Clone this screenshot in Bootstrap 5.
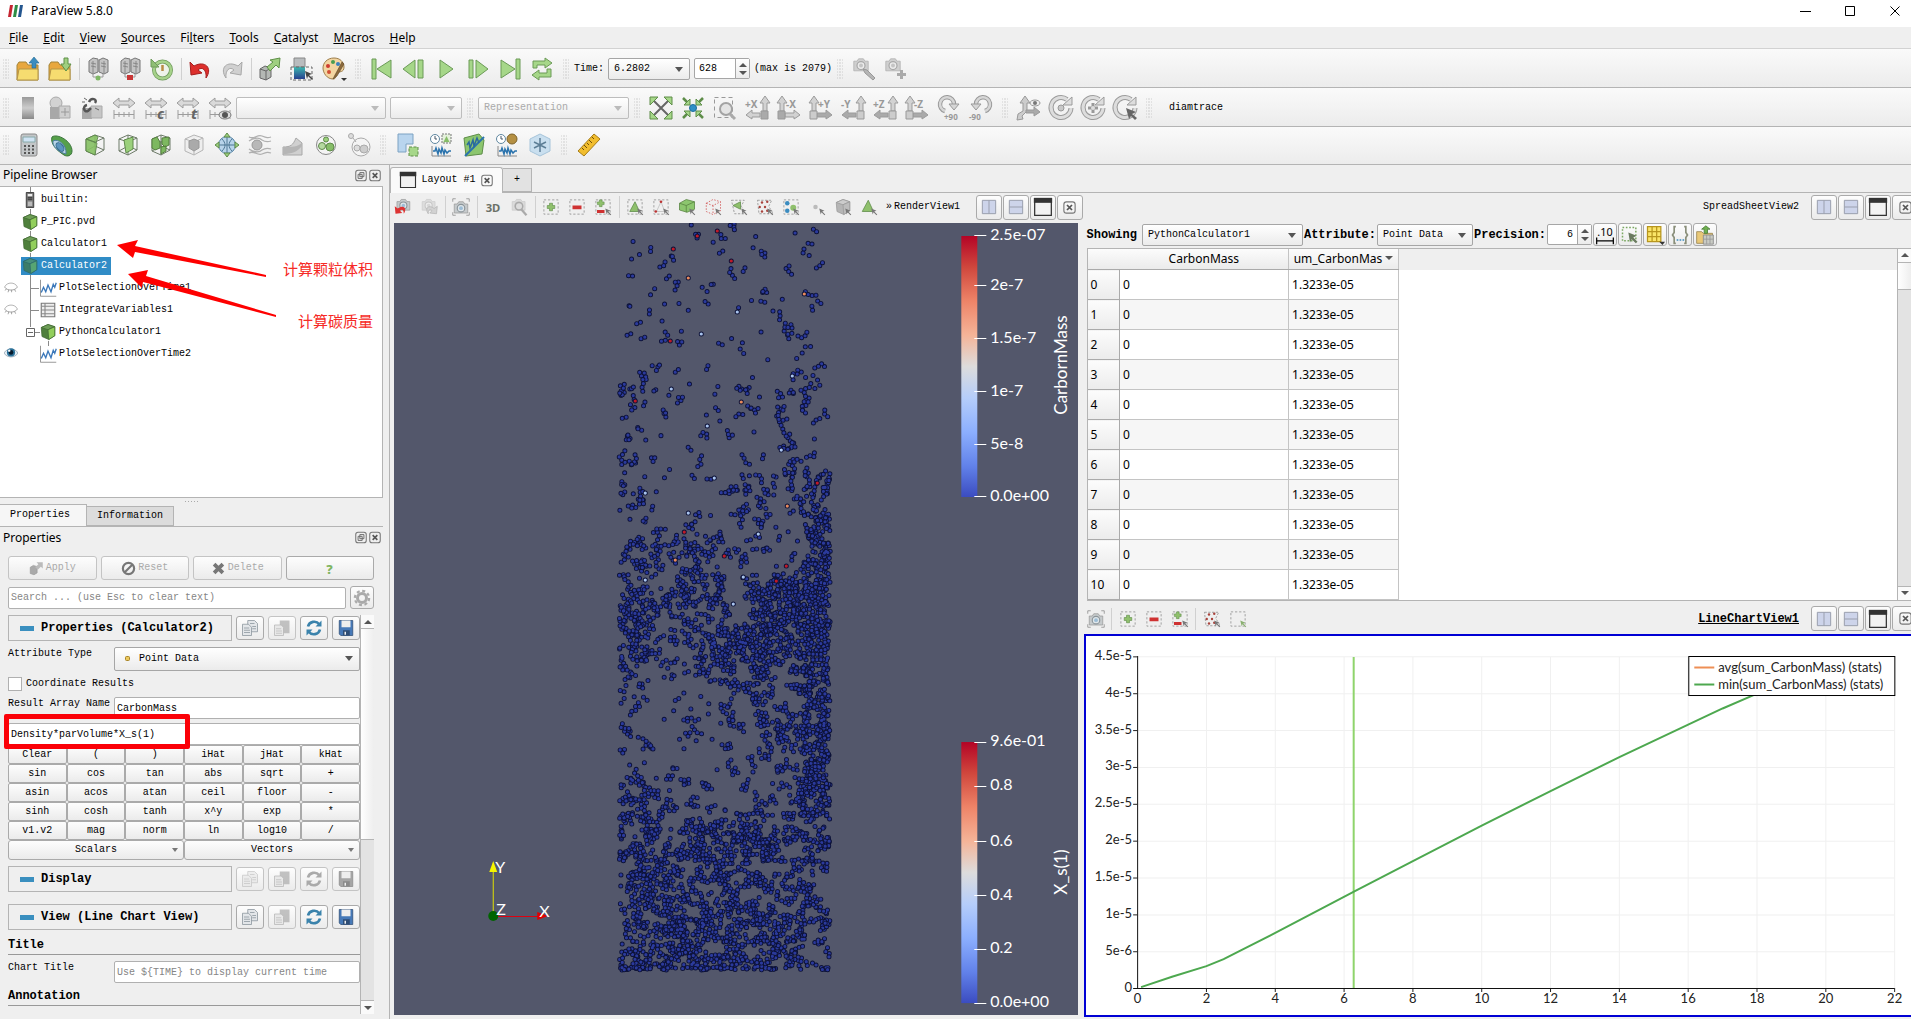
<!DOCTYPE html>
<html lang="en">
<head>
<meta charset="utf-8">
<meta name="viewport" content="width=device-width, initial-scale=1">
<title>ParaView 5.8.0</title>
<link href="https://cdn.jsdelivr.net/npm/bootstrap@5.3.0/dist/css/bootstrap.min.css" rel="stylesheet">
<style>
:root{--mono:"Liberation Mono","Noto Sans CJK SC",monospace;--ui:"Noto Sans","Noto Sans CJK SC",sans-serif;--line:#b4b4b4;--face:#efefef}
body{font:12px/16px var(--ui);color:#000;background:var(--face);height:100vh;overflow:hidden}
.mono{font:10px/14px var(--mono)}
.monob{font:bold 12px/14px var(--mono)}
button,input,select{color:#000}
.titlebar{height:27px;background:#fff;padding:0 0 4px 8px;overflow:hidden}
.titlebar button{width:45px;border:0;background:none;padding:0;line-height:0}
.winbtns{margin-right:-7px}
.menubar{height:22px;gap:15px;padding:0 9px;border-bottom:1px solid #d2d2d2}
.menubar a{color:#000;text-decoration:none;line-height:21px}
.strip{height:39px;padding-top:2px;border-bottom:1px solid var(--line);background:linear-gradient(#fafafa,#ececec)}
.strip.last{height:38px;padding-top:0}
.ib{width:32px;height:32px;border:0;background:none;padding:0;display:flex;align-items:center;justify-content:center;flex:none}
.w33 .ib{width:33px}
.view .ib{width:26px;height:26px}
.ib svg{width:24px;height:24px;overflow:visible}
.view .ib svg{width:18px;height:18px}
.sep{width:6px;height:22px;flex:none;background:linear-gradient(#d0d0d0,#d0d0d0) center/1px 100% no-repeat}
.grip{width:16px;height:22px;flex:none;background:radial-gradient(circle,#aaa 1px,transparent 1px) center/3px 3px;background-clip:content-box;padding:0 5px}
.first{width:12px;padding:0 3px}
.pick{position:relative;display:flex;height:22px;flex:none}
.pick select{appearance:none;width:100%;height:100%;border:1px solid #a6a6a6;border-radius:2px;background:linear-gradient(#fff,#ebebeb);font:10px/14px var(--mono);padding:0 18px 0 5px}
.pick::after{content:"";position:absolute;right:7px;top:9px;border:4px solid transparent;border-top:5px solid #555;border-bottom:0;pointer-events:none}
.pick.off select{color:#aaa;border-color:#bdbdbd}.pick.off::after{border-top-color:#bbb}
.spin{display:flex;height:21px;border:1px solid #a6a6a6;border-radius:2px;background:#fff;flex:none}
.spin input{border:0;background:none;font:10px/14px var(--mono);padding:0 4px;min-width:0;flex:1}
.spin span{width:14px;border-left:1px solid #a6a6a6;background:linear-gradient(#fff,#ebebeb);display:flex;flex-direction:column;align-items:center;justify-content:center;gap:4px}
.up,.dn{border:4px solid transparent;width:0;height:0}
.up{border-bottom:4px solid #555;border-top:0}.dn{border-top:4px solid #555;border-bottom:0}
.dock{width:390px;flex:none;border-right:1px solid var(--line)}
.inner{width:383px}
.dockhead{height:21px;padding:0 1px 0 3px}
.dockhead button,.mini{border:0;background:none;padding:0;width:14px;height:14px;display:flex;align-items:center;justify-content:center}
.tree{border:1px solid var(--line);border-left:0;background:#fff;flex:1 1 0;overflow:hidden;position:relative}
.tree ul{padding-top:2px;position:relative}
.tree li{height:22px;display:flex;align-items:center}
.eye{width:21px;height:16px;flex:none;display:flex;justify-content:center}
.eye svg{width:14px;height:14px}
.node{display:flex;align-items:center;gap:2px;height:18px;padding-right:4px;color:#000;text-decoration:none}
.node svg{width:18px;height:18px}
.node.sel{background:#308cc6;color:#fff}
.sub1{margin-left:18px}
.over{position:absolute;left:0;top:0;pointer-events:none}
.note1,.note2{position:absolute;right:9px;font:15px/20px "Noto Sans CJK SC",sans-serif;color:#f62a26}
.note1{top:72px}.note2{top:124px}
.dots{height:7px;background:radial-gradient(circle,#aaa 1px,transparent 1px) center/3px 3px;background-clip:content-box;padding:2px 183px}
.tabs{height:22px;border-bottom:1px solid var(--line)}
.tabs button{border:1px solid var(--line);font:10px/14px var(--mono);padding:0 10px;background:#dcdcdc}
.tabs .on{background:#f6f6f6;border-bottom-color:#f6f6f6;border-left:0;height:22px}
.tabs .offt{height:20px;margin-left:-1px}
.pb{border:1px solid #aaa;border-radius:3px;background:linear-gradient(#fdfdfd,#ebebeb);display:flex;align-items:center;justify-content:center;gap:2px;font:10px/14px var(--mono);padding:0}
.pb:disabled{border-color:#c4c4c4;color:#aaa}
.acts .pb{flex:1 1 0;height:24px}.acts svg{width:15px;height:15px}
.tx{border:1px solid #b0b0b0;border-radius:2px;height:22px;background:#fff;font:10px/14px var(--mono);padding:0 2px;min-width:0;width:100%}
.tx::placeholder{color:#858585;opacity:1}
.body8{padding:8px 9px 13px 8px}
.row6{margin-top:6px}
.tick{width:14px;height:14px;border-color:#b0b0b0}
.grp{height:26px}
.grp>h2{flex:1;margin:0;height:26px;border:1px solid var(--line);padding-left:11px;display:flex;align-items:center;gap:7px;white-space:nowrap}
.grp>h2::before{content:"";width:14px;height:5px;background:#3a8fbf}
.grp .pb{width:28px;height:24px}.grp svg{width:18px;height:18px}
.lab{width:106px;flex:none;line-height:14px}
.r246{flex:1;position:relative}
.calc{display:grid;grid-template-columns:repeat(6,1fr)}
.calc .pb{height:19px;border-radius:2px}
.dd{position:relative;height:20px}.dd::after{content:"";position:absolute;right:5px;top:7px;border:3px solid transparent;border-top:4px solid #777;border-bottom:0}
.redbox{position:absolute;left:-4px;top:-9px;width:186px;height:35px;border:5px solid #fb0007;border-radius:2px;pointer-events:none}
.sect{height:17px;border-bottom:1px solid #999}
.sbar{width:14px;flex:none;display:flex;flex-direction:column;border-left:1px solid var(--line);background:#e3e3e3}
.sbar i{height:14px;background:#fafafa;display:flex;align-items:center;justify-content:center;border-bottom:1px solid var(--line);flex:none}
.sbar i.e{border-top:1px solid var(--line);border-bottom:0;margin-top:auto}
.sbar b{background:linear-gradient(90deg,#fff,#eee);border-bottom:1px solid var(--line)}
.ltabs{height:28px;padding-top:2px;border-bottom:1px solid var(--line)}
.ltabs .t1{height:26px;width:113px;background:#fafafa;border:1px solid var(--line);border-bottom:0;border-radius:3px 3px 0 0;margin-bottom:-1px;gap:4px;padding:0}
.ltabs .t2{height:24px;width:29px;background:#e2e2e2;border:1px solid var(--line);border-left:0;align-self:end;padding:0}
.view{height:29px}
.view.tall{height:33px;padding-top:3px}
.wb{width:26px;height:25px}.wb svg{width:20px;height:20px}
.wb[data-i=closebox] svg{width:15px;height:15px}
.render{background:#53576b;overflow:hidden;margin:1px 5px 4px 4px}
.render svg,.chart svg{width:100%;height:100%;display:block}
.mid{flex:693 1 0;min-width:0}
.right{flex:829 1 0;min-width:0}
.cut{margin-right:-7px}
.g1{gap:1px}
.sheetbar{height:26px;padding-left:4px;gap:1px}
.sheetbar .pb{width:24px;height:23px}.sheetbar svg{width:20px;height:20px}
.sheet{height:353px;border:1px solid var(--line);border-right:0;margin-left:4px;background:linear-gradient(var(--face) 21px,#fff 21px)}
.sheet table{border-collapse:collapse;table-layout:fixed;width:311px;font:12px/16px var(--ui)}
.sheet td{border:1px solid #c4c4c4;height:30px;padding:0 3px}
.sheet tr:nth-child(even) td{background:#f6f6f6}
.sheet th{font-weight:400;padding:0 3px;height:30px;background:linear-gradient(#fcfcfc,#ebebeb);border:1px solid #aaa;border-left:0}
.sheet thead th{height:21px;border-top:0;text-align:center;white-space:nowrap;overflow:hidden;border-right-color:#c4c4c4}
.sheet thead th:first-child{border-right:0}
.chart{border:2px solid #0000d4;border-right:0;background:#fff;margin:0 0 2px 1px}
.lato{font-family:Lato,sans-serif}
</style>
</head>
<body class="d-flex flex-column">
<header class="titlebar d-flex align-items-center">
  <svg width="15" height="12" viewBox="0 0 15 12" aria-hidden="true"><path d="M2 0h3L3 12H0z" fill="#c52430"/><path d="M7 0h3L8 12H5z" fill="#2f8d45"/><path d="M12 0h3l-2 12h-3z" fill="#24568f"/></svg>
  <span class="ms-1 ps-1">ParaView 5.8.0</span>
  <div class="ms-auto d-flex winbtns">
    <button title="Minimize"><svg width="11" height="11"><path d="M0 5.5h11" stroke="#000"/></svg></button>
    <button title="Maximize"><svg width="11" height="11"><path d="M.5.5h9v9h-9z" fill="none" stroke="#000"/></svg></button>
    <button title="Close"><svg width="11" height="11"><path d="M.5.5l9 9m0-9l-9 9" stroke="#000"/></svg></button>
  </div>
</header>
<nav class="menubar d-flex">
  <a href="#"><u>F</u>ile</a><a href="#"><u>E</u>dit</a><a href="#"><u>V</u>iew</a><a href="#"><u>S</u>ources</a><a href="#">Fi<u>l</u>ters</a><a href="#"><u>T</u>ools</a><a href="#"><u>C</u>atalyst</a><a href="#"><u>M</u>acros</a><a href="#"><u>H</u>elp</a>
</nav>

<div class="strip d-flex align-items-center mono">
  <span class="grip first"></span>
  <button class="ib" data-i="open"></button><button class="ib" data-i="save"></button><span class="sep"></span>
  <button class="ib" data-i="connect"></button><button class="ib" data-i="disconnect"></button><button class="ib" data-i="history"></button><span class="sep"></span>
  <button class="ib" data-i="undo"></button><button class="ib" data-i="redo"></button><span class="sep"></span>
  <button class="ib" data-i="autoapply"></button><button class="ib" data-i="rescale"></button><button class="ib" data-i="palette"></button>
  <span class="grip"></span>
  <button class="ib" data-i="first"></button><button class="ib" data-i="prev"></button><button class="ib" data-i="play"></button><button class="ib" data-i="next"></button><button class="ib" data-i="last"></button><button class="ib" data-i="loop"></button>
  <span class="grip"></span>
  <label for="time">Time:</label>
  <div class="pick ms-1" style="width:82px"><select id="time"><option>6.2802</option></select></div>
  <div class="spin mx-1" style="width:56px"><input id="step" value="628" aria-label="Time step"><span><i class="up"></i><i class="dn"></i></span></div>
  <span>(max is 2079)</span>
  <span class="grip"></span>
  <button class="ib" data-i="camwrench"></button><button class="ib" data-i="camplus"></button>
</div>

<div class="strip d-flex align-items-center mono">
  <span class="grip first"></span>
  <button class="ib" data-i="legend"></button><button class="ib" data-i="editmap"></button><button class="ib" data-i="sepmap"></button><button class="ib" data-i="range"></button><button class="ib" data-i="rangec"></button><button class="ib" data-i="ranget"></button><button class="ib" data-i="rangeeye"></button>
  <div class="pick off" style="width:150px"><select aria-label="Color array" disabled><option></option></select></div>
  <div class="pick off ms-1" style="width:72px"><select aria-label="Component" disabled><option></option></select></div>
  <span class="grip"></span>
  <div class="pick off" style="width:151px"><select aria-label="Representation" disabled><option>Representation</option></select></div>
  <span class="grip"></span>
  <button class="ib" data-i="reset"></button><button class="ib" data-i="zoomdata"></button><button class="ib" data-i="zoombox"></button><button class="ib" data-i="px"></button><button class="ib" data-i="mx"></button><button class="ib" data-i="py"></button><button class="ib" data-i="my"></button><button class="ib" data-i="pz"></button><button class="ib" data-i="mz"></button><button class="ib" data-i="rotp"></button><button class="ib" data-i="rotm"></button>
  <span class="grip"></span>
  <button class="ib" data-i="axeseye"></button><button class="ib" data-i="center1"></button><button class="ib" data-i="center2"></button><button class="ib" data-i="center3"></button>
  <span class="grip"></span>
  <button class="mono border-0 bg-transparent p-0 ms-2 ps-1">diamtrace</button>
</div>

<div class="strip last w33 d-flex align-items-center">
  <span class="grip first"></span>
  <button class="ib" data-i="calculator"></button><button class="ib" data-i="contour"></button><button class="ib" data-i="clip"></button><button class="ib" data-i="slice"></button><button class="ib" data-i="threshold"></button><button class="ib" data-i="extract"></button><button class="ib" data-i="glyph"></button><button class="ib" data-i="stream"></button><button class="ib" data-i="warp"></button><button class="ib" data-i="group"></button><button class="ib" data-i="level"></button>
  <span class="grip"></span>
  <button class="ib" data-i="exsel"></button><button class="ib" data-i="plottime"></button><button class="ib" data-i="plotline"></button><button class="ib" data-i="plotglobal"></button><button class="ib" data-i="probe"></button>
  <span class="grip"></span>
  <button class="ib" data-i="ruler"></button>
</div>

<main class="d-flex flex-grow-1" style="min-height:0">
  <aside class="dock d-flex flex-column">
    <div class="inner dockhead d-flex align-items-center"><span class="me-auto">Pipeline Browser</span><button data-i="undock"></button><button data-i="closebox"></button></div>
    <div class="inner tree mono">
      <svg class="over" width="120" height="180"><path d="M30.500 0v5M30.500 22v5M30.500 44v5M30.500 66v5M30.500 88v52M31 101.500h8M31 123.500h8M35 145.500h5M48.500 154v5" stroke="#8a8a8a" fill="none"/><path d="M26.500 141.500h8v8h-8zM28 145.500h5" stroke="#666" fill="#fff"/></svg>
      <ul class="list-unstyled m-0">
        <li><span class="eye"></span><a class="node" href="#"><span data-i="server"></span>builtin:</a></li>
        <li><span class="eye"></span><a class="node" href="#"><span data-i="cube"></span>P_PIC.pvd</a></li>
        <li><span class="eye"></span><a class="node" href="#"><span data-i="cube"></span>Calculator1</a></li>
        <li><span class="eye"></span><a class="node sel" href="#"><span data-i="cubesel"></span>Calculator2</a></li>
        <li><span class="eye" data-i="eyeoff"></span><a class="node sub1" href="#"><span data-i="plot"></span>PlotSelectionOverTime1</a></li>
        <li><span class="eye" data-i="eyeoff"></span><a class="node sub1" href="#"><span data-i="sheet"></span>IntegrateVariables1</a></li>
        <li><span class="eye"></span><a class="node sub1" href="#"><span data-i="cube"></span>PythonCalculator1</a></li>
        <li><span class="eye" data-i="eyeon"></span><a class="node sub1" href="#"><span data-i="plot"></span>PlotSelectionOverTime2</a></li>
      </ul>
      <svg class="over" width="290" height="140" viewBox="0 186 290 140"><path d="M117 244l21-5-3 6 131 29v2l-131-25-2 6zM128 273l20-4-2 6 130 39v2l-133-35-1 6z" fill="#fe0000"/></svg>
      <span class="note1">计算颗粒体积</span><span class="note2">计算碳质量</span>
    </div>
    <div class="inner dots"></div>
    <div class="inner tabs d-flex align-items-end"><button class="on">Properties&nbsp;</button><button class="offt">Information</button></div>
    <div class="inner dockhead d-flex align-items-center"><span class="me-auto">Properties</span><button data-i="undock"></button><button data-i="closebox"></button></div>
    <div class="inner body8">
      <div class="acts d-flex gap-1"><button class="pb" disabled><span data-i="applyi"></span>Apply</button><button class="pb" disabled><span data-i="nosign"></span>Reset</button><button class="pb" disabled><span data-i="xmark"></span>Delete</button><button class="pb" data-i="help"></button></div>
      <div class="d-flex align-items-center gap-1 row6"><input class="tx" placeholder="Search ... (use Esc to clear text)" aria-label="Search properties"><button class="pb flex-shrink-0" style="width:24px;height:23px" data-i="gear"></button></div>
      <div class="d-flex row6">
        <div class="flex-grow-1">
          <div class="grp d-flex align-items-center gap-1"><h2 class="monob">Properties (Calculator2)</h2><button class="pb" data-i="copy"></button><button class="pb" disabled data-i="paste"></button><button class="pb" data-i="refresh"></button><button class="pb" data-i="disk"></button></div>
          <div class="d-flex mono row6"><label class="lab" for="at">Attribute Type</label><div class="pick r246" style="height:24px"><select id="at" class="ps-4"><option>Point Data</option></select><svg class="over" style="left:11px;top:9px" width="6" height="6"><rect x=".5" y=".5" width="4" height="4" rx="1" fill="#ecc95d" stroke="#a88428"/></svg></div></div>
          <div class="d-flex align-items-center gap-1 mono row6"><input type="checkbox" id="cr" class="form-check-input m-0 rounded-0 tick"><label for="cr">Coordinate Results</label></div>
          <div class="d-flex mono row6"><label class="lab" for="ra">Result Array Name</label><input id="ra" class="tx r246" value="CarbonMass"></div>
          <div class="position-relative mt-1 d-flex"><input class="tx" value="Density*parVolume*X_s(1)" aria-label="Expression"><span class="redbox"></span></div>
          <div class="calc" id="calc"></div>
          <div class="d-flex"><button class="pb dd w-50">Scalars</button><button class="pb dd w-50">Vectors</button></div>
          <div class="grp d-flex align-items-center gap-1 row6"><h2 class="monob">Display</h2><button class="pb" disabled data-i="copyoff"></button><button class="pb" disabled data-i="paste"></button><button class="pb" disabled data-i="refreshoff"></button><button class="pb" disabled data-i="diskoff"></button></div>
          <div class="grp d-flex align-items-center gap-1" style="margin-top:12px"><h2 class="monob">View (Line Chart View)</h2><button class="pb" data-i="copy"></button><button class="pb" disabled data-i="paste"></button><button class="pb" data-i="refresh"></button><button class="pb" data-i="disk"></button></div>
          <div class="sect monob mt-2">Title</div>
          <div class="d-flex mono row6"><label class="lab" for="ct">Chart Title</label><input id="ct" class="tx r246" placeholder="Use ${TIME} to display current time"></div>
          <div class="sect monob row6">Annotation</div>
        </div>
        <div class="sbar" style="margin-bottom:-8px"><i><span class="up"></span></i><b style="height:53%"></b><i class="e"><span class="dn"></span></i></div>
      </div>
    </div>
  </aside>

  <section class="mid d-flex flex-column">
    <div class="ltabs d-flex"><button class="t1 mono d-flex align-items-center justify-content-center"><span data-i="win"></span>Layout #1<span class="mini" data-i="closebox"></span></button><button class="t2 mono">+</button></div>
    <div class="view d-flex align-items-center mono">
      <button class="ib" data-i="camundo"></button><button class="ib" data-i="camredo"></button><span class="sep"></span>
      <button class="ib" data-i="camera"></button><span class="sep"></span>
      <button class="ib" data-i="threed"></button><button class="ib" data-i="camzoom"></button><span class="sep"></span>
      <button class="ib" data-i="selplus"></button><button class="ib" data-i="selminus"></button><button class="ib" data-i="seltoggle"></button><span class="sep"></span>
      <button class="ib" data-i="selcell"></button><button class="ib" data-i="selpt"></button><button class="ib" data-i="selcube"></button><button class="ib" data-i="selfr"></button><button class="ib" data-i="selpolyc"></button><button class="ib" data-i="selpolyp"></button><button class="ib" data-i="selblock"></button><button class="ib" data-i="intpt"></button><button class="ib" data-i="intcube"></button><button class="ib" data-i="hover"></button>
      <span class="ps-1">»&thinsp;RenderView1</span>
      <div class="d-flex ms-auto g1"><button class="pb wb" data-i="splith"></button><button class="pb wb" data-i="splitv"></button><button class="pb wb" data-i="win"></button><button class="pb wb" data-i="closebox"></button></div>
    </div>
    <div class="render flex-grow-1" style="min-height:0">
      <svg viewBox="394 223 683 792" preserveAspectRatio="xMidYMid meet" class="lato" fill="#fff" font-size="16">
        <defs><linearGradient id="cw" x1="0" y1="0" x2="0" y2="1"><stop offset="0" stop-color="#b40426"/><stop offset=".12" stop-color="#d0473d"/><stop offset=".25" stop-color="#ee8468"/><stop offset=".38" stop-color="#f5b498"/><stop offset=".5" stop-color="#dddcdc"/><stop offset=".62" stop-color="#b5cdfa"/><stop offset=".75" stop-color="#8caffe"/><stop offset=".88" stop-color="#6282ea"/><stop offset="1" stop-color="#3b4cc0"/></linearGradient></defs>
        <g id="particles"></g>
        <rect x="961" y="236" width="16" height="261" fill="url(#cw)"/><rect x="961" y="742" width="16" height="261" fill="url(#cw)"/>
        <path d="M974 235.500h12M974 285.500h12M974 338.500h12M974 391.500h12M974 444.500h12M974 496.500h12M974 742.500h12M974 786.500h12M974 841.500h12M974 895.500h12M974 949.500h12M974 1003.500h12" stroke="#fff"/>
        <text x="990" y="240">2.5e-07</text><text x="990" y="290">2e-7</text><text x="990" y="343">1.5e-7</text><text x="990" y="396">1e-7</text><text x="990" y="449">5e-8</text><text x="990" y="501">0.0e+00</text>
        <text x="990" y="746">9.6e-01</text><text x="990" y="790">0.8</text><text x="990" y="846">0.6</text><text x="990" y="900">0.4</text><text x="990" y="953">0.2</text><text x="990" y="1007">0.0e+00</text>
        <text transform="translate(1067 365) rotate(-90)" text-anchor="middle" font-size="17">CarbornMass</text>
        <text transform="translate(1067 872) rotate(-90)" text-anchor="middle" font-size="17">X_s(1)</text>
        <path d="M493 916v-46" stroke="#e0e000"/><path d="M493 861l-4 11h8z" fill="#f4f400"/><path d="M493 916.500h46" stroke="#e00010"/><path d="M548 916l-11-4v8z" fill="#e00000"/><circle cx="493" cy="916" r="5" fill="#006400"/>
        <text x="495" y="873">Y</text><text x="496" y="915">Z</text><text x="539" y="917">X</text>
      </svg>
    </div>
  </section>

  <section class="right d-flex flex-column overflow-hidden">
    <div class="ltabs"></div>
    <div class="view d-flex align-items-center mono justify-content-end"><span class="me-2 pe-1">SpreadSheetView2</span><div class="d-flex cut g1"><button class="pb wb" data-i="splith"></button><button class="pb wb" data-i="splitv"></button><button class="pb wb" data-i="win"></button><button class="pb wb" data-i="closebox"></button></div></div>
    <div class="sheetbar d-flex align-items-center">
      <label class="monob" for="sh">Showing</label><div class="pick ms-1" style="width:161px"><select id="sh"><option>PythonCalculator1</option></select></div>
      <label class="monob" for="aa">Attribute:</label><div class="pick" style="width:96px"><select id="aa"><option>Point Data</option></select></div>
      <label class="monob" for="pr">Precision:</label><div class="spin" style="width:45px"><input id="pr" value="6" class="text-end"><span><i class="up"></i><i class="dn"></i></span></div>
      <button class="pb" data-i="fixed10"></button><button class="pb" data-i="selonly"></button><button class="pb" data-i="gridy"></button><button class="pb" data-i="braces"></button><button class="pb" data-i="export"></button>
    </div>
    <div class="sheet d-flex">
      <div class="flex-grow-1"><table><colgroup><col style="width:32px"><col style="width:169px"><col style="width:110px"></colgroup><thead><tr><th></th><th>CarbonMass</th><th>um_CarbonMas <span class="dn d-inline-block align-middle mb-1"></span></th></tr></thead><tbody id="rows"></tbody></table></div>
      <div class="sbar"><i><span class="up"></span></i><b style="height:27px"></b><i class="e"><span class="dn"></span></i></div>
    </div>
    <div class="view tall d-flex align-items-center mono">
      <button class="ib" data-i="camera"></button><span class="sep"></span><button class="ib" data-i="selplus"></button><button class="ib" data-i="selminus"></button><button class="ib" data-i="seltoggle"></button><span class="sep"></span><button class="ib" data-i="selpolyp"></button><button class="ib" data-i="selbox"></button>
      <u class="monob ms-auto me-2 pe-1">LineChartView1</u><div class="d-flex cut g1"><button class="pb wb" data-i="splith"></button><button class="pb wb" data-i="splitv"></button><button class="pb wb" data-i="win"></button><button class="pb wb" data-i="closebox"></button></div>
    </div>
    <div class="chart flex-grow-1" style="min-height:0">
      <svg id="plot" viewBox="1086 636 825 379" class="lato" font-size="13" fill="#222"></svg>
    </div>
  </section>
</main>

<script src="https://cdn.jsdelivr.net/npm/bootstrap@5.3.0/dist/js/bootstrap.bundle.min.js"></script>
<script>
// Icon library, each drawn on a 24 x 24 grid
const cam = (x, y, s) => `<g transform="translate(${x} ${y}) scale(${s})"><path d="M1 4h4l2-3h6l2 3h4v12H1z" fill="#c6cacc" stroke="#9a9a9a"/><circle cx="10" cy="9.500" r="5" fill="#dfe6ea" stroke="#8b9499" stroke-width="1.500"/><circle cx="10" cy="9.500" r="2.500" fill="#9dbdd6"/></g>`;
const gcam = (x, y, s) => `<g transform="translate(${x} ${y}) scale(${s})"><path d="M1 4h4l2-3h6l2 3h4v12H1z" fill="#cfcfcf" stroke="#b0b0b0"/><circle cx="10" cy="9.500" r="5" fill="#ececec" stroke="#a8a8a8" stroke-width="1.500"/><circle cx="10" cy="9.500" r="2.500" fill="#c4c4c4"/></g>`;
const clk = '<circle cx="6" cy="6" r="4.500" fill="#fff" stroke="#5f87a0"/><path d="M6 3v3h2" fill="none" stroke="#456"/>';
const wave = '<path d="M3 13v10h19" fill="none" stroke="#888"/><path d="M4 18h2l1-3 2 6 1-5 2 4 1-5 2 6 1-4 2 3 2-2h2" fill="none" stroke="#2a73ad" stroke-width="1.500"/>';
const dash = (c = '#8a8a8a') => `<path d="M2.500 2.500h19v19h-19z" fill="none" stroke="${c}" stroke-dasharray="3 2.500"/>`;
const ptr = '<path d="M15 14l7 3-3 1 4 4-1 1-4-4-1 3z" fill="#777"/>';
const plus = (x, y, k = 1) => `<path transform="translate(${x} ${y}) scale(${k})" d="M-2-5h4v3h3v4h-3v3h-4v-3h-3v-4h3z" fill="#8fc06c" stroke="#5b8a47" stroke-width=".8"/>`;
const cube = (f, s, t, l) => `<path d="M3 6l9-4 9 3v12l-8 5-9-4z" fill="${f}" stroke="${s}"/><path d="M3 6l9 3 9-4-9-3z" fill="${t}" stroke="${s}"/><path d="M12 9l9-4v12l-8 5z" fill="${l}" stroke="${s}"/>`;
const wire = '<path d="M3 6l9-4 9 3v12l-9 5-9-4zM3 6l9 3 9-4M12 9v13M12 2v11l-9 5m9-5l9 4" fill="none" stroke="#6d7a68"/>';
const rng = '<path d="M1 7l6-5v3h10V2l6 5-6 5V9H7v3z" fill="#d9d9d9" stroke="#9c9c9c"/><path d="M2 14v9M22 14v9M2 18.500h20M7 16v5M12 16v5M17 16v5" stroke="#9c9c9c" fill="none"/>';
const ax = (left, t, dark) => {
  const x = left ? 16 : 1, a = left ? 'M15 17H7v-3l-6 5 6 4v-2h8z' : 'M8 17h9v-3l6 5-6 4v-2H8z', up = left ? 20 : 5;
  return `<path d="M${up-2} 15V7h-3l5-7 5 7h-3v8z" fill="#d2d2d2" stroke="#9b9b9b"/><path d="${a}" fill="${dark ? '#aaa' : '#d2d2d2'}" stroke="#9b9b9b"/><path d="M${x} 15h7v8h-7z" fill="${dark ? '#ccc' : '#aaa'}" stroke="#999"/><text x="${left ? 0 : 9}" y="12" font-family="Noto Sans" font-weight="700" font-size="10" fill="#999">${t}</text>`;
};
const ring = m => `<path d="M18 3.500A10 10 0 1 0 22 12" fill="none" stroke="#9b9b9b" stroke-width="5"/><path d="M18 3.500A10 10 0 1 0 22 12" fill="none" stroke="#ddd" stroke-width="3"/><path d="M14 9h9V1z" fill="#ddd" stroke="#9b9b9b"/>${m}`;
const rot = (t, f) => `<g transform="${f ? 'translate(24 0) scale(-1 1)' : ''}"><path d="M8 15A7 7 0 1 1 17 8" fill="none" stroke="#999" stroke-width="4.500"/><path d="M8 15A7 7 0 1 1 17 8" fill="none" stroke="#d6d6d6" stroke-width="2.500"/><path d="M12 8h10l-5 6z" fill="#d6d6d6" stroke="#999"/></g><text x="${f ? 0 : 7}" y="24" font-family="Noto Sans" font-weight="700" font-size="8" fill="#999">${t}</text>`;
const tri = (d) => `<path d="${d}" fill="#a6d789" stroke="#6b9a57" stroke-linejoin="round"/>`;
const srv = c => `<path d="M3 4l4-3 5 1v13l-5 2-4-2zM13 3l4-2 5 2v12l-4 2-5-2z" fill="#c4c4c4" stroke="#777"/><path d="M5 6l5 1M5 9l5 1M15 6l5 1M15 9l5 1M7 4v12M18 4v12" stroke="#888"/><path d="M7 17v3h10v-3" fill="none" stroke="#999"/>${c}`;
const doc = (o, c1, c2) => `<g opacity="${o}"><path d="M9 2h9l4 4v11H9z" fill="${c2}" stroke="${c1}"/><path d="M2 7h8l4 4v11H2z" fill="${c2}" stroke="${c1}"/><path d="M4 12h7M4 15h8M4 18h8M12 6h6M15 10h5M15 13h5" stroke="${c1}"/></g>`;
const refr = c => `<path d="M4 10a8.500 8.500 0 0 1 15-3M20 14a8.500 8.500 0 0 1-15 3" fill="none" stroke="${c}" stroke-width="3.500"/><path d="M22 2v8h-8zM2 22v-8h8z" fill="${c}"/>`;
const floppy = (a, b) => `<path d="M3 2h18v20H5l-2-2z" fill="${a}" stroke="${b}"/><path d="M6 2h12v9H6z" fill="#eee"/><path d="M8 15h9v7H8z" fill="${b}"/><path d="M10 17h2v4h-2z" fill="#eee"/>`;
const pline = '<path d="M2 1v22h21" fill="none" stroke="#777"/><path d="M3 18l3-7 3 6 3-9 4 9 3-10 2 4 2-6" fill="none" stroke="#3b78ba" stroke-width="1.800"/>';
const I = {
  open: '<path d="M1 8l2-3h7l2 3h10v15H1z" fill="#e8a73e" stroke="#a3853a"/><path d="M3 12h19v11H1z" fill="#f6dc70" stroke="#b49548"/><path d="M18 0l5 6h-3v5h-4V6h-3z" fill="#3b8cc0" stroke="#24698f" stroke-width=".6"/>',
  save: '<path d="M1 8l2-3h7l2 3h10v15H1z" fill="#e8a73e" stroke="#a3853a"/><path d="M3 12h19v11H1z" fill="#f6dc70" stroke="#b49548"/><path d="M18 14l5-7h-3V1h-4v6h-3z" fill="#9fcf80" stroke="#5f9048"/>',
  connect: srv('<circle cx="12" cy="21" r="2.500" fill="#7fb765"/>'), disconnect: srv('<path d="M9 18h6v5H9z" fill="#c93636"/>'),
  history: '<circle cx="12.500" cy="13" r="8.500" fill="#eef3ea" stroke="#6f9a5b" stroke-width="4"/><circle cx="12.500" cy="13" r="8.500" fill="none" stroke="#a6d28a" stroke-width="2.500"/><path d="M1 2v8h8z" fill="#8fbf74" stroke="#6f9a5b"/><path d="M12.500 8v6" stroke="#b88b45" stroke-width="2.500"/>',
  undo: '<path d="M2 5l1 13 11-2-4-3c4-4 9 0 8 8 7-10-1-18-12-12z" fill="#dd2f2c" stroke="#a51d1d"/>',
  redo: '<path d="M22 5l-1 13-11-2 4-3c-4-4-9 0-8 8C-1 11 7 3 18 9z" fill="#d0d0d0" stroke="#a8a8a8"/>',
  autoapply: '<path d="M2 12l5-3 6 2v9l-5 3-6-2z" fill="#b4b8b4" stroke="#666"/><path d="M2 12l6 2 5-3M8 14v9" fill="none" stroke="#666"/><path d="M9 10l6-5-3-2 10-2-1 10-3-3-6 6z" fill="#9fcf80" stroke="#5f9048"/>',
  rescale: '<defs><linearGradient id="rb" x1="0" y1="0" x2="0" y2="1"><stop offset="0" stop-color="#3db8b0"/><stop offset="1" stop-color="#26408f"/></linearGradient></defs><path d="M4 1h11v9H4z" fill="#b9bcbe" stroke="#888"/><path d="M4 10h11v12H4z" fill="url(#rb)"/><path d="M1 10h21v13H1z" fill="none" stroke="#666" stroke-dasharray="3 2"/><path d="M15 14l7 3-3 1 4 4-1 1-4-4-1 3z" fill="#444"/>',
  palette: '<path d="M12 1C5 1 1 6 1 11s4 11 10 11c4 0 2-4 4-6s7 0 7-6c0-5-4-9-10-9z" fill="#f3d5a1" stroke="#9c7d4b"/><circle cx="6" cy="9" r="2" fill="#cf3b30"/><circle cx="11" cy="5" r="2" fill="#4c9e50"/><circle cx="16" cy="7" r="2" fill="#3b80bd"/><circle cx="7" cy="15" r="2" fill="#d24f34"/><path d="M20 5l-7 13-2 4 4-3 7-12z" fill="#8d6a3b" stroke="#5b4527" stroke-width=".6"/><path d="M19 21h6l-3 3z" fill="#333"/>',
  first: tri('M2 2h4v20H2zM21 3v18L7 12z'), prev: tri('M1 12L13 3v18zM16 3h5v18h-5z'), play: tri('M6 3l13 9-13 9z'), next: tri('M3 3h4v18H3zM10 3l12 9-12 9z'), last: tri('M3 3l14 9-14 9zM18 2h4v20h-4z'),
  loop: tri('M3 11V4h12V1l7 5-7 5V8H7v3zM21 12v8H9v3l-7-5 7-5v3h8v-4z'),
  camwrench: gcam(1, 1, .8) + '<path d="M11 12l4 1 8 8-2 2-8-7z" fill="#b5b5b5" stroke="#999"/>', camplus: gcam(1, 1, .8) + '<path d="M16 13h3v3h3v3h-3v3h-3v-3h-3v-3h3z" fill="#aaa"/>',
  legend: '<defs><linearGradient id="lg" x1="0" y1="0" x2="0" y2="1"><stop offset="0" stop-color="#9a9a9a"/><stop offset=".5" stop-color="#ccc"/><stop offset="1" stop-color="#888"/></linearGradient></defs><path d="M6 1h12v22H6z" fill="url(#lg)"/>',
  editmap: '<circle cx="8" cy="7" r="6" fill="#d2d2d2" stroke="#aaa"/><path d="M2 11h10v12H2z" fill="#a8a8a8"/><path d="M11 10h11v12H11z" fill="#cfcfcf" stroke="#aaa"/><path d="M13 16h8M17 12v8" stroke="#999"/>',
  sepmap: '<path d="M2 12h10v11H2z" fill="#a8a8a8"/><path d="M11 10h11v12H11z" fill="#c6c6c6" stroke="#aaa"/><path d="M9 6c2-5 9-3 6 1M7 9c-5 1-3 8 1 6l3-3" fill="none" stroke="#555" stroke-width="2.500"/><path d="M4 2l3 2M2 6h3M15 12l4 2" stroke="#666"/>',
  range: rng, rangec: rng + '<text x="13" y="23" font-family="Noto Sans" font-style="italic" font-weight="700" font-size="15" fill="#666">c</text>', ranget: rng + '<text x="15" y="23" font-family="Noto Sans" font-style="italic" font-weight="700" font-size="15" fill="#666">t</text>', rangeeye: rng + '<ellipse cx="17" cy="19" rx="6" ry="4" fill="#ddd" stroke="#777"/><circle cx="17" cy="19" r="3" fill="#555"/>',
  reset: '<path d="M4 4l16 16M20 4L4 20" stroke="#666" stroke-width="2"/><path d="M1 1h8L1 9zM23 1v8l-8-8zM1 23v-8l8 8zM23 23h-8l8-8z" fill="#a6d789" stroke="#5e8d49"/>',
  zoomdata: '<path d="M2 2l4 4m16-4l-4 4M2 22l4-4m16 4l-4-4" stroke="#5e8d49" stroke-width="2.500"/><path d="M9 3v6H3zM15 3v6h6zM9 21v-6H3zM15 21v-6h6z" fill="#a6d789" stroke="#5e8d49"/><circle cx="12" cy="12" r="3.500" fill="#2f8fc7" stroke="#1f6d9c"/>',
  zoombox: '<path d="M1.500 1.500h18v20h-18z" fill="none" stroke="#999" stroke-dasharray="4 3"/><circle cx="13" cy="13" r="6" fill="#e4e4e4" stroke="#a3a3a3" stroke-width="2"/><path d="M17 18l5 5" stroke="#aaa" stroke-width="3"/>',
  px: ax(1, '+X'), mx: ax(0, '-X'), py: ax(0, '+Y', 1), my: ax(1, '-Y', 1), pz: ax(1, '+Z', 1), mz: ax(0, '-Z', 1), rotp: rot('+90', 0), rotm: rot('-90', 1),
  axeseye: '<path d="M6 15V7H3l5-7 5 7h-3v8l-5 5 1 3-6 1 1-6z" fill="#ccc" stroke="#999"/><path d="M9 14h8v-3l6 5-6 4v-3H9z" fill="#aaa" stroke="#999"/><ellipse cx="18" cy="7" rx="5" ry="3" fill="#eee" stroke="#999"/><circle cx="18" cy="7" r="2" fill="#777"/>',
  center1: ring('<circle cx="12" cy="12" r="3" fill="#c8c8c8" stroke="#999"/>'), center2: ring('<path d="M12 7v10M7 12h10" stroke="#999" stroke-width="3"/><circle cx="12" cy="12" r="2" fill="#ddd"/>'), center3: ring('<path d="M13 12l10 4-4 2 5 4-2 2-4-4-2 3z" fill="#666"/>'),
  calculator: '<rect x="4" y="1" width="16" height="22" rx="2" fill="#c3c6c8" stroke="#8a8a8a"/><path d="M6 4h12v5H6z" fill="#cfe3f3" stroke="#8aa"/><path d="M7 13h2m2 0h2m2 0h2M7 16.500h2m2 0h2m2 0h2M7 20h2m2 0h2m2 0h2" stroke="#555" stroke-width="2"/>',
  contour: '<path d="M2 4c5-4 20 4 20 14 0 5-5 6-8 4C6 17 0 10 2 4z" fill="#56a04a" stroke="#39743a"/><path d="M3 8c5-3 14 4 13 13C8 19 2 13 3 8z" fill="#b9d5e8" stroke="#4c7f9d"/><ellipse cx="10" cy="14" rx="3" ry="5" transform="rotate(-40 10 14)" fill="#5c95be" stroke="#36698c"/>',
  clip: wire + '<path d="M3 6l9 3 2 1-2 12-9-4zM3 6l9-4 3 2-2 6z" fill="#86c163" stroke="#5f8a4b" opacity=".9"/>',
  slice: wire + '<path d="M8 7l9-3v12l-7 4z" fill="#9bd07c" stroke="#5f8a4b"/>',
  threshold: wire + '<path d="M3 6l5-2 3 5v6l-5 2-3-2zM13 5l7-1v8l-4 2-3-3zM12 14l5-1v5l-5 3z" fill="#7db860" stroke="#55803f"/>',
  extract: '<path d="M3 6l9-4 9 3v12l-9 5-9-4zM3 6l9 3 9-4M12 9v13" fill="#eee" stroke="#b5b5b5"/><path d="M7 8l5-2 5 2v7l-5 3-5-3z" fill="#aaa" stroke="#999"/>',
  glyph: '<circle cx="12" cy="12" r="8.500" fill="#b8d4ea" stroke="#5583a4"/><path d="M12 4v16M4 12h16M7 6c4 4 4 8 0 12M17 6c-4 4-4 8 0 12" fill="none" stroke="#4f7894"/><path d="M12 0l3 4H9zM12 24l3-4H9zM0 12l4-3v6zM24 12l-4-3v6z" fill="#9bd07c" stroke="#5f8a4b"/>',
  stream: '<circle cx="9" cy="12" r="5" fill="#b8b8b8" stroke="#999"/><path d="M1 4c5 3 8-3 13-1s6 2 9 1M1 8c4-3 10-4 13-1 3 2 6 2 9 1M1 20c5-3 8 3 13 1s6-2 9-1M1 16c4 3 10 4 13 1 3-2 6-2 9-1" fill="none" stroke="#b0b0b0" stroke-width="1.300"/>',
  warp: '<path d="M2 14c8 0 10-2 13-9l6 5v12H2z" fill="#d0d0d0" stroke="#a8a8a8"/><path d="M2 14c10 0 14 0 19-4v3c-5 6-10 8-19 8z" fill="#b5b5b5"/>',
  group: '<circle cx="12" cy="12" r="9.500" fill="#f4f4f4" stroke="#888"/><circle cx="12" cy="6.500" r="2.500" fill="#9bd07c" stroke="#5f8a4b"/><circle cx="8" cy="13" r="3.500" fill="#b5d9a0" stroke="#5f8a4b"/><circle cx="16" cy="14" r="4" fill="#86bd68" stroke="#5f8a4b"/>',
  level: '<circle cx="14" cy="14" r="9" fill="#f4f4f4" stroke="#aaa"/><circle cx="4" cy="3" r="2.500" fill="#ddd" stroke="#aaa"/><path d="M6 5l3 4" stroke="#aaa"/><circle cx="10" cy="15" r="3" fill="#ddd" stroke="#aaa"/><circle cx="17" cy="16" r="4" fill="#ccc" stroke="#aaa"/>',
  exsel: '<path d="M2 1h15v10h-7v8H2z" fill="#b9d5ee" stroke="#7da2c2"/><path d="M13 14h9v9h-9z" fill="#a6d789" stroke="#5e8d49" stroke-dasharray="3 1.500"/>',
  plottime: clk + '<path d="M13 1h9v9h-9z" fill="#e4f0dc" stroke="#777" stroke-dasharray="2 1"/><path d="M17.500 3l3 6h-6z" fill="#86bd68"/>' + wave,
  plotline: '<path d="M2 5l15-4 5 6-2 14-16 2z" fill="#8cc66e" stroke="#5e8d49"/><path d="M3 23L22 4" stroke="#2a73ad" stroke-width="2"/><path d="M5 12l2-3 1 6 3-8 1 6 3-8 2 5" fill="none" stroke="#2a6a9d" stroke-width="1.500"/>',
  plotglobal: clk + '<circle cx="17" cy="6" r="5" fill="#b59043" stroke="#7d6229"/>' + wave,
  probe: '<path d="M12 1l10 5v12l-10 5L2 18V6z" fill="#c9dfef" stroke="#a6c4da"/><path d="M12 5v14M6 9l12 6M18 9L6 15" stroke="#5c7e96" stroke-width="1.500"/>',
  ruler: '<path d="M17 1l6 5L7 23l-6-5z" fill="#f1bd2e" stroke="#a67c17"/><path d="M15 4l2 2M12 7l3 3M10 10l2 2M7 12l3 3M5 15l2 2" stroke="#704f0c"/>',
  undock: '<rect x="3" y="3" width="18" height="18" rx="4" fill="none" stroke="#777" stroke-width="1.800"/><path d="M10 7h7v7h-7zM7 10h7v7H7z" fill="#eee" stroke="#666" stroke-width="1.600"/>',
  closebox: '<rect x="3" y="3" width="18" height="18" rx="4" fill="none" stroke="#777" stroke-width="1.800"/><path d="M8 8l8 8M16 8l-8 8" stroke="#555" stroke-width="2.800"/>',
  server: '<path d="M7 2h10v20H7z" fill="#777" stroke="#222"/><path d="M9 4h6v3H9z" fill="#eee"/><path d="M9 9h6M9 11h6" stroke="#222"/><path d="M9 14h6v6H9z" fill="#bbb"/>',
  cube: cube('#4f803c', '#426a33', '#6e9e57', '#92cf5c'), cubesel: cube('#3d7d69', '#2c6a6c', '#478e7c', '#57a573'),
  plot: pline, sheet: '<path d="M3 3h18v18H3z" fill="#eee" stroke="#777" stroke-width="1.500"/><path d="M3 7h18M3 12h18M3 17h18M8 3v18" stroke="#888" stroke-width="1.500"/>',
  eyeoff: '<path d="M1 12c4-9 18-9 22 0" fill="none" stroke="#aaa" stroke-width="1.500"/><path d="M1 12c4 7 18 7 22 0M4 15l-2 3M8 17l-1 4M13 17v4M18 16l2 4" fill="none" stroke="#999" stroke-width="1.500"/>',
  eyeon: '<path d="M0 12c5-9 19-9 24 0-5 9-19 9-24 0z" fill="#e5eef5" stroke="#789"/><circle cx="12" cy="11" r="7" fill="#2a7199"/><circle cx="12" cy="11" r="4" fill="#05192b"/><circle cx="9" cy="8" r="2" fill="#fff"/>',
  applyi: '<path d="M2 10l5-3 6 2v10l-5 3-6-2z" fill="#aaa" stroke="#999"/><path d="M10 10l5-5-3-3h10v10l-3-3-5 5z" fill="#bbb"/>',
  nosign: '<circle cx="12" cy="12" r="9" fill="none" stroke="#777" stroke-width="3.500"/><path d="M6 18L18 6" stroke="#777" stroke-width="3.500"/>',
  xmark: '<path d="M5 5l14 14M19 5L5 19" stroke="#777" stroke-width="6"/>',
  help: '<text x="12" y="20" text-anchor="middle" font-family="Noto Sans" font-weight="800" font-size="21" fill="#7fb562">?</text>',
  gear: '<circle cx="12" cy="12" r="6" fill="none" stroke="#aaa" stroke-width="4"/><circle cx="12" cy="12" r="9.500" fill="none" stroke="#aaa" stroke-width="3" stroke-dasharray="4 3.460"/>',
  copy: doc(1, '#87919a', '#e3e6e9'), copyoff: doc(.6, '#aaa', '#e6e6e6'),
  paste: '<path d="M9 2h13v17H9z" fill="#aaa" opacity=".7"/><path d="M2 8h9l3 3v11H2z" fill="#e8e8e8" stroke="#b5b5b5"/><path d="M4 13h7M4 16h8M4 19h8" stroke="#bbb"/>',
  refresh: refr('#3b83ac'), refreshoff: refr('#aaa'), disk: floppy('#4679b8', '#2f4d74'), diskoff: floppy('#a5a5a5', '#8a8a8a'),
  win: '<path d="M2 2h20v20H2z" fill="#f2f2f2" stroke="#333" stroke-width="1.500"/><path d="M1 1h22v6H1z" fill="#333"/>',
  camundo: cam(3, 1, .95) + '<path d="M1 11l1 10 9-1-3-3c3-3 5-1 5 4 5-7 0-13-8-7z" fill="#d33"/>', camredo: '<g opacity=".55">' + gcam(2, 1, .95) + '<path d="M23 11l-1 10-9-1 3-3c-3-3-5-1-5 4-5-7 0-13 8-7z" fill="#bbb" stroke="#888"/></g>',
  camera: cam(2, 4, 1) + '<path d="M1 5V1h4M19 1h4v4M1 19v4h4M23 19v4h-4" fill="none" stroke="#888"/>',
  threed: '<text x="12" y="18" text-anchor="middle" font-family="Noto Sans" font-weight="700" font-size="15" fill="#6b7167">3D</text>',
  camzoom: '<g opacity=".6">' + gcam(2, 1, .95) + '</g><circle cx="12" cy="11" r="5" fill="#ddd" stroke="#aaa" stroke-width="2"/><path d="M15 15l7 8" stroke="#aaa" stroke-width="3"/>',
  selplus: dash() + plus(12, 12), selminus: dash() + '<path d="M6 10h12v5H6z" fill="#cf3232"/>', seltoggle: dash() + plus(9, 7, .9) + '<path d="M4 16h10v4H4z" fill="#cf3232"/>' + ptr,
  selcell: dash() + '<path d="M12 5l6 13H5z" fill="#8fc06c" stroke="#5b8a47"/>' + ptr, selpt: dash() + '<path d="M12 5l5 13H6z" fill="none" stroke="#bbb"/><circle cx="12" cy="5" r="1.800" fill="#b33"/><circle cx="5" cy="18" r="1.800" fill="#b33"/>' + ptr,
  selcube: '<path d="M2 7l9-5 11 3v10l-10 4-10-3z" fill="#8cc66e" stroke="#55803f"/><path d="M2 7l9 3 11-5M11 10v9" fill="none" stroke="#55803f"/>' + ptr, selfr: '<path d="M3 7l9-5 10 3v12l-10 5-9-4zM3 7l9 3 10-5M12 10v12" fill="none" stroke="#c44" stroke-dasharray="2 2"/>' + ptr,
  selpolyc: '<path d="M2 3h17l-4 8 6 10H6z" fill="none" stroke="#888" stroke-dasharray="3 2"/><path d="M4 10l10-5v10z" fill="#8fc06c" stroke="#5b8a47"/>' + ptr, selpolyp: '<path d="M2 3h19l-4 8 6 10H4z" fill="none" stroke="#888" stroke-dasharray="3 2"/><g fill="#a9433c"><circle cx="8" cy="6" r="1.600"/><circle cx="15" cy="5" r="1.600"/><circle cx="5" cy="12" r="1.600"/><circle cx="12" cy="12" r="1.600"/><circle cx="8" cy="18" r="1.600"/><circle cx="15" cy="17" r="1.600"/></g>' + ptr,
  selblock: dash() + '<circle cx="7" cy="7" r="3" fill="#3b8cc0"/><circle cx="7" cy="17" r="3" fill="#3b8cc0"/><circle cx="15" cy="13" r="4" fill="#8fc06c"/>' + ptr,
  intpt: '<circle cx="10" cy="12" r="3" fill="#bbb"/>' + ptr, intcube: cube('#b5b5b5', '#999', '#ccc', '#bdbdbd') + ptr, hover: '<path d="M11 3l7 15H3z" fill="#8fc06c" stroke="#5b8a47"/>' + ptr,
  selbox: dash() + '<path d="M15 14l7 3-3 1 4 4-1 1-4-4-1 3z" fill="#8ab070"/>',
  splith: '<path d="M4 4h16v16H4z" fill="#cdd4ea" stroke="#9a9fae" stroke-width="1.200"/><path d="M12 4v16" stroke="#9a9fae" stroke-width="1.200"/>', splitv: '<path d="M4 4h16v16H4z" fill="#cdd4ea" stroke="#9a9fae" stroke-width="1.200"/><path d="M4 12h16" stroke="#9a9fae" stroke-width="1.200"/>',
  fixed10: '<text x="12" y="13" text-anchor="middle" font-family="Noto Sans" font-size="13">.10</text><path d="M2 15v8M22 15v8M2 19h20" stroke="#000" stroke-width="1.500"/>',
  selonly: '<path d="M3 3h16v16H3z" fill="none" stroke="#7ba862" stroke-width="1.800" stroke-dasharray="2 2"/><path d="M10 9l10 4-4 2 5 5-2 2-5-5-2 4z" fill="#6b7b60"/>',
  gridy: '<path d="M3 2h16v18H3z" fill="#fbe568" stroke="#b8961e" stroke-width="1.500"/><path d="M3 8h16M3 14h16M8.500 2v18M14 2v18" stroke="#b8961e" stroke-width="1.500"/><path d="M17 20h7l-3 4z" fill="#333"/>',
  braces: '<path d="M7 2H5v7l-2 3 2 3v7h2M17 2h2v7l2 3-2 3v7h-2" fill="none" stroke="#8a8f7a" stroke-width="2"/><path d="M8 18h2m1.500 0h2m1.500 0h2" stroke="#3b8cc0" stroke-width="2"/>',
  export: '<path d="M2 8h6l2 2h11v12H2z" fill="#e9c878" stroke="#9a8550"/><path d="M10 12h12v11H10z" fill="#c9cbc4" stroke="#888"/><path d="M14 12v11M18 12v11M10 17h12" stroke="#999"/><path d="M13 1l5 4h-3v5h-4V5H8z" fill="#6fb04f" stroke="#4c7f38"/>'
};
document.querySelectorAll('[data-i]').forEach(el => {
  const small = el.matches('.dockhead button,.mini');
  const s = small || el.dataset.i === 'closebox' ? 15 : 18;
  el.classList.add('lh-1');
  el.innerHTML = `<svg width="${s}" height="${s}" viewBox="0 0 24 24" aria-hidden="true">${I[el.dataset.i]}</svg>`;
  if (el.tagName === 'BUTTON') el.setAttribute('aria-label', el.dataset.i);
});

// Calculator keypad
document.getElementById('calc').innerHTML = 'Clear ( ) iHat jHat kHat sin cos tan abs sqrt + asin acos atan ceil floor - sinh cosh tanh x^y exp * v1.v2 mag norm ln log10 /'
  .split(' ').map(k => `<button class="pb">${k}</button>`).join('');
// Spreadsheet rows
document.getElementById('rows').innerHTML = [...Array(11).keys()].map(n => `<tr><th scope="row">${n}</th><td>0</td><td>1.3233e-05</td></tr>`).join('');

// Particle cloud: density class per 27 x 25 cell, top to bottom
const map = ['11222112','12111212','12222222','22111222','22211141','32111112','42113144','32223152','31122132','42112142','41115437','41124437','43542328','55554328','53663699','77662999','84568979','64376868','41235648','31324548','42324479','31213458','54433359','75423557','56588857','76776646','68766654','66777766','67867775','87776664'];
const count = [0, 1.8, 4, 8, 14, 23, 34, 46, 60, 75];
let seed = 42;
const rnd = () => (seed = (seed * 16807) % 2147483647) / 2147483647;
const pts = [];
map.forEach((row, r) => [...row].forEach((c, k) => {
  let px = 0, py = 0;
  const n = Math.floor(count[c] + rnd());
  for (let i = 0; i < n; i++) {
    if (i && rnd() < .6) { const a = rnd() * 6.3; px += 4 * Math.cos(a); py += 4 * Math.sin(a); }
    else { px = 619 + (k + rnd()) * 26.300; py = 223 + (r + rnd()) * 25; }
    pts.push([px < 619 ? 619 + rnd() * 6 : px > 830 ? 830 - rnd() * 6 : px, Math.min(970 - rnd() * 3, py)]);
  }
}));
const layers = Array.from({length: 24}, () => []);
pts.forEach(p => layers[Math.floor(rnd() * 24)].push(`M${p[0].toFixed(1)} ${p[1].toFixed(1)}h.01`));
const dots = (d, c) => `<path d="${d}" stroke="#0d1238" stroke-width="5" stroke-linecap="round"/><path d="${d}" stroke="${c}" stroke-width="3.200" stroke-linecap="round"/>`;
const special = {
  '#c01a28': [[697,236],[717,231],[673,249],[731,261],[670,341],[635,401],[817,483],[786,566],[776,581],[684,532],[724,556]],
  '#e88a5c': [[688,278],[804,294],[741,402],[675,560],[787,506]],
  '#a9c4ee': [[737,312],[671,389],[701,334],[792,376],[707,426],[781,450],[714,478],[645,493],[688,513],[758,534],[645,580],[743,577],[733,604]]
};
document.getElementById('particles').innerHTML = layers.map(l => dots(l.join(''), '#2b3a9c')).join('') +
  Object.entries(special).map(([c, a]) => dots(a.map(p => `M${p[0]} ${p[1]}h.01`).join(''), c)).join('');

// Line chart
const X = v => 1137.500 + v * 34.400, Y = v => 988.500 - v * 73.700;
let g = '';
for (let v = 2; v <= 22; v += 2) g += `<path d="M${X(v)} 657V988" stroke="#f0f0f0"/><path d="M${X(v)} 988v4" stroke="#222"/>`;
for (let v = .5; v <= 4.5; v += .5) g += `<path d="M1137 ${Y(v)}H1894" stroke="#f0f0f0"/><path d="M1133 ${Y(v)}h4" stroke="#222"/>`;
for (let v = 0; v <= 22; v += 2) g += `<text x="${X(v)}" y="1003" text-anchor="middle">${v}</text>`;
['0','5e-6','1e-5','1.5e-5','2e-5','2.5e-5','3e-5','3.5e-5','4e-5','4.5e-5'].forEach((t, i) => g += `<text x="1132" y="${Y(i / 2) + 3}" text-anchor="end">${t}</text>`);
g += '<path d="M1137.500 656V988.500H1894M1133 988.500h4" fill="none" stroke="#111"/><path d="M1353.500 657v331" stroke="#8fd46c" stroke-width="2"/>';
g += `<polyline points="${[[.1,.02],[1,.16],[2,.305],[2.500,.4],[3,.52],[4,.755],[6.300,1.320],[8,1.730],[10,2.210],[12,2.680],[14,3.140],[16,3.580],[17,3.800],[17.900,3.980]].map(p => X(p[0]) + ',' + Y(p[1])).join(' ')}" fill="none" stroke="#4da84f" stroke-width="2"/>`;
g += '<rect x="1688.500" y="656.500" width="206" height="39" fill="#fff" stroke="#000"/><path d="M1694 667.500h20" stroke="#ee8f55" stroke-width="2"/><path d="M1694 684.500h20" stroke="#4da84f" stroke-width="2"/><text x="1718" y="672">avg(sum_CarbonMass) (stats)</text><text x="1718" y="689">min(sum_CarbonMass) (stats)</text>';
document.getElementById('plot').innerHTML = g;
</script>
</body>
</html>
